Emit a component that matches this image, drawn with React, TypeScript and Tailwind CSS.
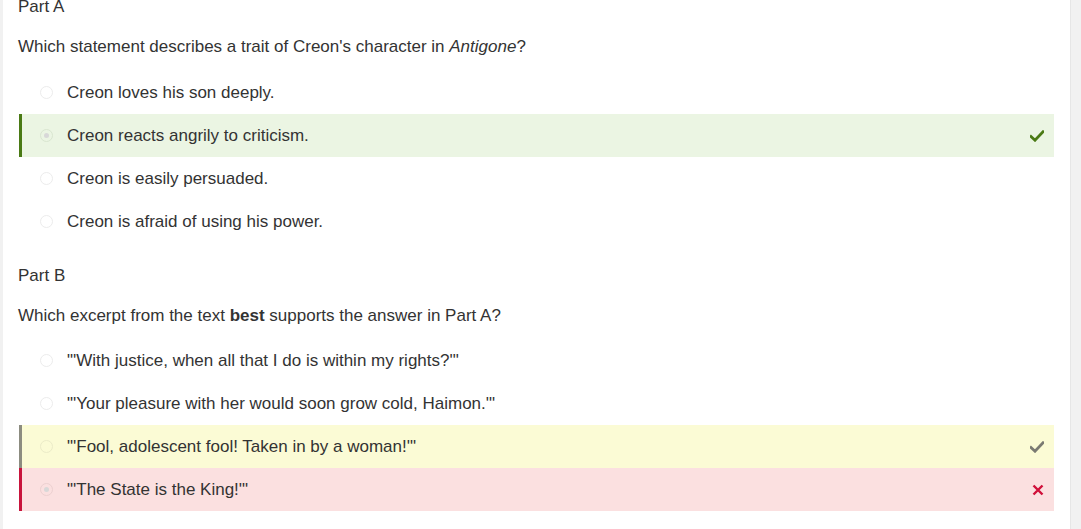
import { ReactNode } from 'react'

type RowState = 'none' | 'correct' | 'partial' | 'wrong'

function Radio({ checked, tone }: { checked?: boolean; tone: RowState }) {
  const ring =
    tone === 'correct'
      ? 'border-[#d9e6d0]'
      : tone === 'partial'
        ? 'border-[#ebebc8]'
        : tone === 'wrong'
          ? 'border-[#ecd0d0]'
          : 'border-[#ececec]'
  return (
    <span
      className={`w-[13px] h-[13px] rounded-full border ${ring} flex items-center justify-center flex-shrink-0`}
    >
      {checked && <span className="w-[5px] h-[5px] rounded-full bg-[#d8d8d8]" />}
    </span>
  )
}

function CheckIcon({ color }: { color: string }) {
  return (
    <svg width="14" height="12" viewBox="0 0 14 12">
      <path d="M1 6.5 L5 10.2 L13 1.8" fill="none" stroke={color} strokeWidth="2.8" strokeLinecap="square" />
    </svg>
  )
}

function CrossIcon() {
  return (
    <svg width="12" height="12" viewBox="0 0 12 12">
      <path d="M1.5 1.5 L10.5 10.5 M10.5 1.5 L1.5 10.5" stroke="#d0103a" strokeWidth="2.4" />
    </svg>
  )
}

function Option({ children, state = 'none' }: { children: ReactNode; state?: RowState }) {
  const styles = {
    none: 'border-transparent bg-white',
    correct: 'border-[#4a7a15] bg-[#ebf5e3]',
    partial: 'border-[#8c8c80] bg-[#fbfbd5]',
    wrong: 'border-[#c8143c] bg-[#fbe0e0]',
  }[state]
  return (
    <div className={`h-[43px] flex items-center border-l-[3px] ${styles} pl-[18px] pr-[10px]`}>
      <Radio tone={state} checked={state === 'correct' || state === 'wrong'} />
      <span className="ml-[14px] flex-1 pt-[1px]">{children}</span>
      {state === 'correct' && <CheckIcon color="#4a7a15" />}
      {state === 'partial' && <CheckIcon color="#7a7a72" />}
      {state === 'wrong' && <CrossIcon />}
    </div>
  )
}

export default function App() {
  return (
    <div className="w-[1081px] h-[529px] overflow-hidden flex bg-white text-[17px] text-[#333] font-['Liberation_Sans',Arial,sans-serif]">
      <div className="w-[3px] bg-[#f1f1f1] flex-shrink-0" />
      <div className="flex-1 pl-[15px] pr-[16px]">
        <div className="-mt-[3px] leading-[20px]">Part A</div>
        <div className="mt-[20px] leading-[20px]">
          Which statement describes a trait of Creon's character in <i>Antigone</i>?
        </div>
        <div className="mt-[14px] ml-[1px]">
          <Option>Creon loves his son deeply.</Option>
          <Option state="correct">Creon reacts angrily to criticism.</Option>
          <Option>Creon is easily persuaded.</Option>
          <Option>Creon is afraid of using his power.</Option>
        </div>
        <div className="mt-[23px] leading-[20px]">Part B</div>
        <div className="mt-[20px] leading-[20px]">
          Which excerpt from the text <b>best</b> supports the answer in Part A?
        </div>
        <div className="mt-[13px] ml-[1px]">
          <Option>"'With justice, when all that I do is within my rights?'"</Option>
          <Option>"'Your pleasure with her would soon grow cold, Haimon.'"</Option>
          <Option state="partial">"'Fool, adolescent fool! Taken in by a woman!'"</Option>
          <Option state="wrong">"'The State is the King!'"</Option>
        </div>
      </div>
      <div className="w-[11px] bg-[#f1f1f1] border-l border-[#e6e6e6] flex-shrink-0" />
    </div>
  )
}
